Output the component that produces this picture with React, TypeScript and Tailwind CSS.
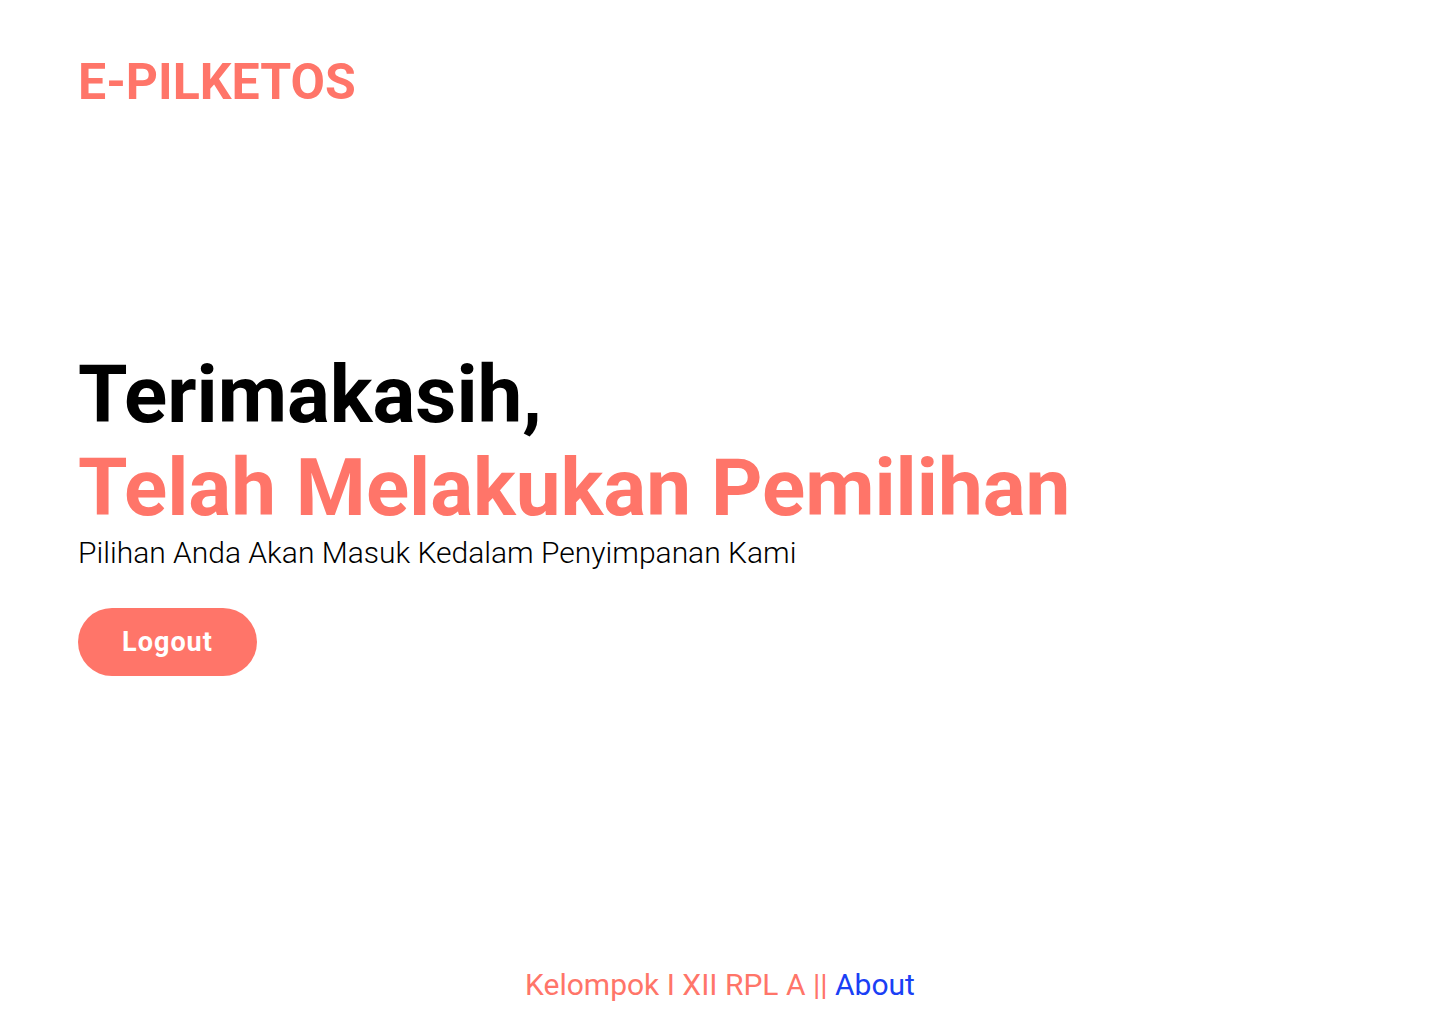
import React from "react";

export default function App() {
  return (
    <div
      className="min-h-screen h-[1024px] w-full bg-white flex flex-col"
      style={{ fontFamily: "Roboto, 'Liberation Sans', sans-serif" }}
    >
      <header className="pl-[78px] pt-[52px]">
        <h1 className="text-[50px] leading-[60px] font-bold text-[#ff7569]">E-PILKETOS</h1>
      </header>
      <main className="flex-1 pl-[78px] pt-[237px]">
        <h2 className="text-[80px] leading-[93px] font-bold text-black">Terimakasih,</h2>
        <h2 className="text-[80px] leading-[93px] font-bold text-[#ff7569]">Telah Melakukan Pemilihan</h2>
        <p className="text-[30px] leading-[36px] font-light text-black">
          Pilihan Anda Akan Masuk Kedalam Penyimpanan Kami
        </p>
        <button className="mt-[37px] w-[179px] h-[68px] rounded-full bg-[#ff7569] text-white text-[27px] tracking-[1px] font-bold flex items-center justify-center">
          Logout
        </button>
      </main>
      <footer className="pb-[21px] text-center text-[30px] leading-[36px]">
        <span className="text-[#ff7569]">Kelompok I XII RPL A || </span>
        <a className="text-[#1a40f5]" href="#">About</a>
      </footer>
    </div>
  );
}
